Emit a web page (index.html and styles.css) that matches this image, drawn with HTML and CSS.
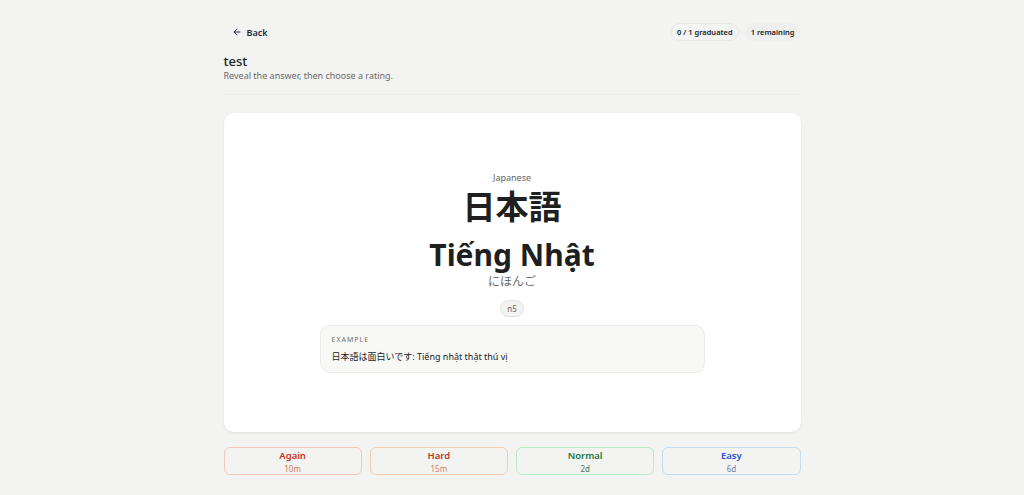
FILE: index.html
```html
<!DOCTYPE html>
<html lang="en">
  <head>
    <meta charset="UTF-8" />
    <title>Study - test</title>
    <link rel="stylesheet" href="styles.css">
  </head>
  <body>
    <div class="page">
      <div class="topbar">
        <a class="back" href="#">
          <svg width="10" height="10" viewBox="0 0 24 24" fill="none" stroke="currentColor" stroke-width="2.4" stroke-linecap="round" stroke-linejoin="round"><path d="M19 12H5"/><path d="M12 19l-7-7 7-7"/></svg>
          Back
        </a>
        <div class="stats">
          <span class="pill outlined">0 / 1 graduated</span>
          <span class="pill">1 remaining</span>
        </div>
      </div>

      <div class="heading">
        <h1>test</h1>
        <p>Reveal the answer, then choose a rating.</p>
      </div>

      <div class="card">
        <div class="lang">Japanese</div>
        <div class="term">日本語</div>
        <div class="meaning">Tiếng Nhật</div>
        <div class="reading">にほんご</div>
        <span class="tag">n5</span>
        <div class="example">
          <div class="example-label">EXAMPLE</div>
          <div class="example-text">日本語は面白いです: Tiếng nhật thật thú vị</div>
        </div>
      </div>

      <div class="ratings">
        <button class="rate again">Again<span>10m</span></button>
        <button class="rate hard">Hard<span>15m</span></button>
        <button class="rate normal">Normal<span>2d</span></button>
        <button class="rate easy">Easy<span>6d</span></button>
      </div>
    </div>
  </body>
</html>
```
FILE: styles.css
```css
body {
  margin: 0;
  background-color: #f3f3f1;
  color: #1f1f1f;
  font-family: "Noto Sans", "Noto Sans CJK JP", sans-serif;
}

.page {
  width: 577px;
  margin: 0 auto;
  padding-top: 22px;
}

.topbar {
  display: flex;
  justify-content: space-between;
  align-items: center;
  height: 20px;
}

.back {
  display: flex;
  align-items: center;
  gap: 5px;
  margin-left: 8px;
  color: #1f2a3a;
  text-decoration: none;
  font-size: 9px;
  font-weight: 600;
}

.stats {
  display: flex;
  gap: 6px;
}

.pill {
  font-size: 7.5px;
  font-weight: 600;
  color: #222;
  padding: 3px 5px;
  border-radius: 10px;
  background: #efefed;
  border: 1px solid transparent;
}

.pill.outlined {
  background: #f4f4f2;
  border-color: #e8e8e5;
}

.heading {
  margin-top: 10px;
  padding-bottom: 12px;
  border-bottom: 1px solid #efeeeb;
}

.heading h1 {
  margin: 0;
  font-size: 13px;
  font-weight: 500;
  line-height: 18px;
}

.heading p {
  margin: 0;
  font-size: 9px;
  color: #6b6b6b;
  line-height: 12px;
}

.card {
  margin-top: 18px;
  background: #fff;
  border-radius: 10px;
  box-shadow: 0 1px 3px rgba(0, 0, 0, 0.08);
  height: 319px;
  box-sizing: border-box;
  padding-top: 58px;
  display: flex;
  flex-direction: column;
  align-items: center;
}

.lang {
  font-size: 9px;
  color: #666;
  line-height: 14px;
}

.term {
  font-size: 33px;
  font-weight: 700;
  line-height: 40px;
  margin-top: 2px;
}

.meaning {
  font-size: 30px;
  font-weight: 700;
  line-height: 42px;
  margin-top: 7px;
}

.reading {
  font-size: 12px;
  color: #6a6a6a;
  line-height: 12px;
  margin-top: 0;
}

.tag {
  margin-top: 12px;
  font-size: 8px;
  color: #666;
  padding: 2px 6px;
  border-radius: 8px;
  background: #f3f3f1;
  border: 1px solid #e4e4e1;
}

.example {
  margin-top: 8px;
  width: 385px;
  box-sizing: border-box;
  background: #f8f8f6;
  border: 1px solid #ebebe8;
  border-radius: 10px;
  padding: 9px 11px 9px;
}

.example-label {
  font-size: 7px;
  letter-spacing: 1px;
  color: #6e6e6e;
  line-height: 10px;
}

.example-text {
  margin-top: 6px;
  font-size: 9px;
  color: #222;
  line-height: 12px;
}

.ratings {
  display: grid;
  grid-template-columns: repeat(4, 1fr);
  gap: 8px;
  margin-top: 15px;
}

.rate {
  display: flex;
  flex-direction: column;
  align-items: center;
  height: 28px;
  padding: 1px 0 0;
  background: #f3f3f1;
  border: 1px solid;
  border-radius: 6px;
  font-family: inherit;
  font-size: 9.5px;
  font-weight: 600;
  line-height: 14px;
  cursor: pointer;
}

.rate span {
  font-size: 8px;
  font-weight: 400;
  line-height: 11px;
}

.again { color: #c2331b; border-color: #f3c8b8; }
.again span { color: #d07a66; }
.hard { color: #b8402a; border-color: #f5cdb0; }
.hard span { color: #d08466; }
.normal { color: #177a3d; border-color: #b7ecc4; }
.normal span { color: #4a7a5a; }
.easy { color: #2353d8; border-color: #c4dcee; }
.easy span { color: #6680b0; }
```
